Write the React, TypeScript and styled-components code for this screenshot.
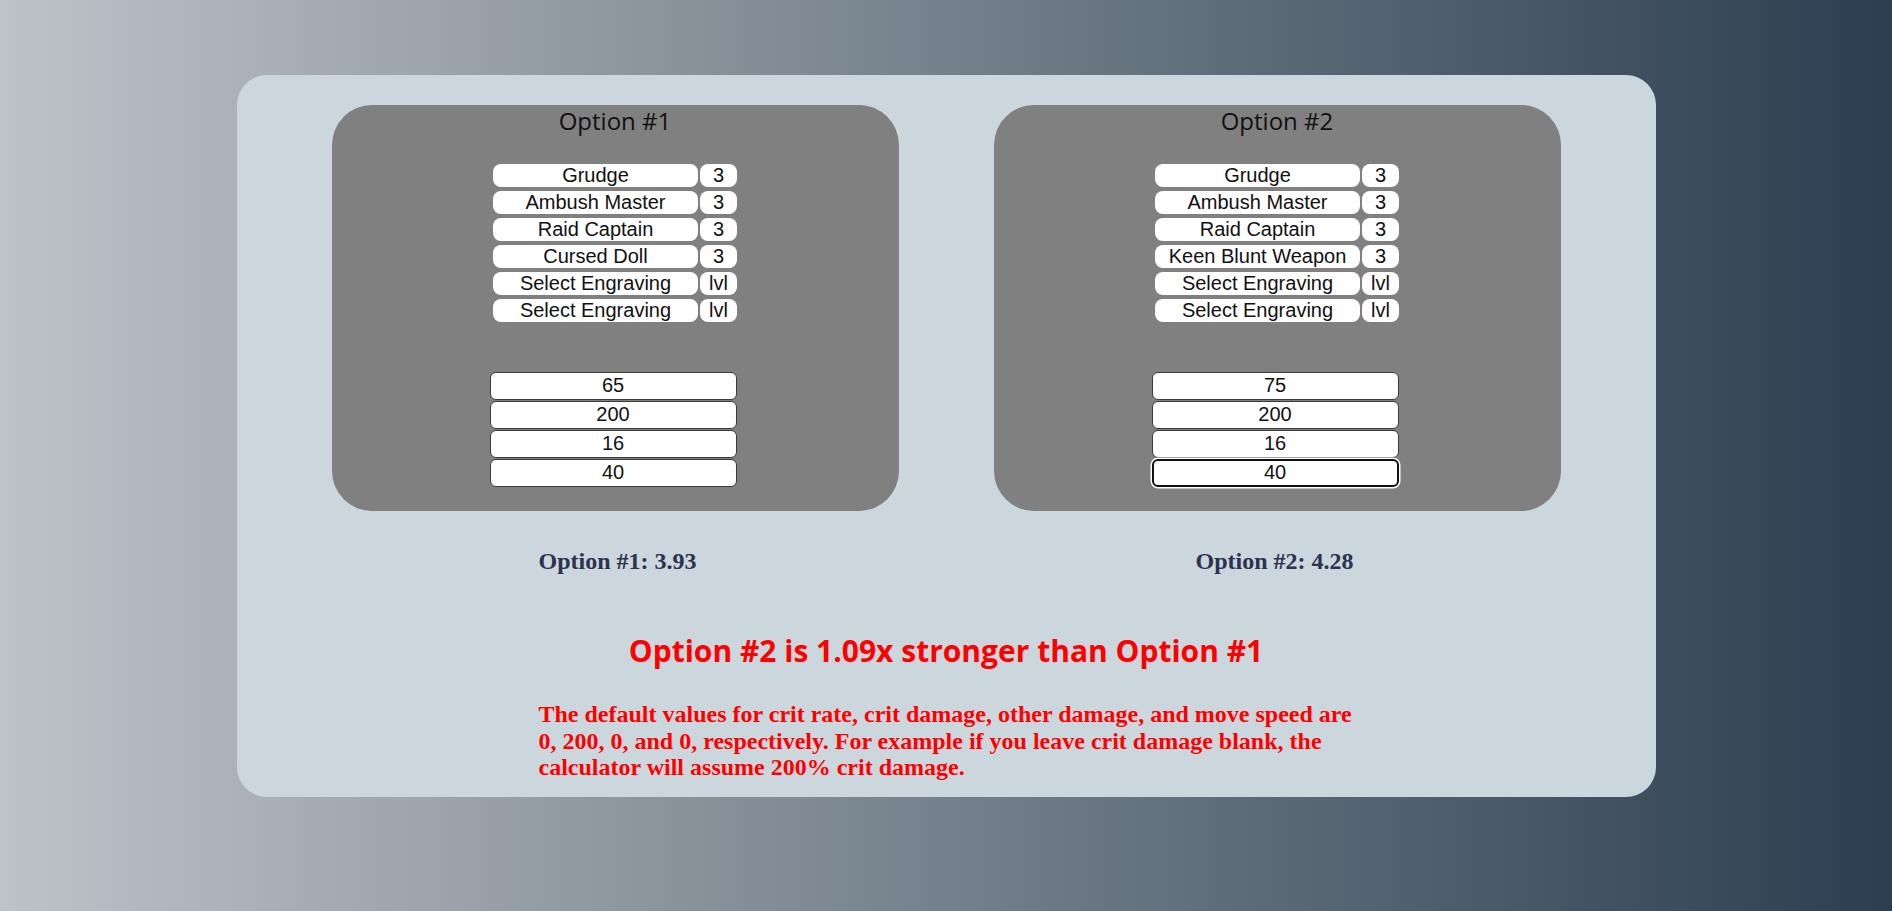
import React, { FC } from "react";
import styled, { createGlobalStyle, css } from "styled-components";

const GlobalStyle = createGlobalStyle`
html, body {
  margin: 0;
  padding: 0;
}
body {
  min-height: 100vh;
  background: linear-gradient(to right, #bdc3c7, #2c3e50);
  font-family: "Liberation Sans", Arial, sans-serif;
}
`;

const Page = styled.div`
padding-top: 75px;
min-height: 100vh;
box-sizing: border-box;
`;

const Card = styled.div`
width: 75%;
margin: 0 auto;
background-color: #ccd6dd;
border-radius: 30px;
padding: 30px 0 16px;
box-sizing: border-box;
`;

const Panels = styled.div`
display: flex;
flex-direction: row;
justify-content: center;
gap: 95px;
`;

const Panel = styled.div`
width: 567px;
height: 406px;
background-color: #808080;
border-radius: 40px;
display: flex;
flex-direction: column;
align-items: center;
box-sizing: border-box;
`;

const PanelTitle = styled.h2`
margin: 0 0 26px;
font-family: "Open Sans", sans-serif;
font-weight: 400;
font-size: 24px;
line-height: 32.7px;
color: #111;
`;

const EngravingList = styled.div`
display: flex;
flex-direction: column;
gap: 4px;
`;

const EngravingRow = styled.div`
display: flex;
flex-direction: row;
gap: 2px;
`;

const Select = styled.select<{ $wide?: boolean }>`
appearance: none;
-webkit-appearance: none;
width: ${(p) => (p.$wide ? "205px" : "37px")};
height: 23px;
padding: 0;
border: none;
border-radius: 8px;
background-color: #fff;
color: #111;
font-family: "Liberation Sans", Arial, sans-serif;
font-size: 20px;
text-align: center;
text-align-last: center;
outline: none;
`;

const StatList = styled.div`
margin-top: 50px;
margin-right: 4px;
display: flex;
flex-direction: column;
gap: 1px;
`;

const StatInput = styled.input<{ $focused?: boolean }>`
width: 247px;
height: 28px;
box-sizing: border-box;
padding: 0 2px;
border: 1px solid #3a3a3a;
border-radius: 6px;
background-color: #fff;
color: #111;
font-family: "Liberation Sans", Arial, sans-serif;
font-size: 20px;
text-align: center;
outline: none;
${(p) =>
  p.$focused &&
  css`
    border: 2px solid #111;
    box-shadow: 0 0 0 1.5px #fff;
  `}
`;

const Results = styled.div`
width: 815px;
margin: 37px auto 0;
display: flex;
justify-content: space-between;
font-family: "Liberation Serif", "Times New Roman", serif;
font-weight: 700;
font-size: 24px;
color: #2d3250;
`;

const Verdict = styled.h2`
margin: 55px 0 30px;
text-align: center;
font-family: "Open Sans", sans-serif;
font-weight: 700;
font-size: 30px;
line-height: 41px;
color: #ff0000;
`;

const Note = styled.p`
width: 815px;
margin: 0 auto;
font-family: "Liberation Serif", "Times New Roman", serif;
font-weight: 700;
font-size: 24px;
line-height: 26.5px;
color: #ff0000;
`;

type Option = {
  title: string;
  engravings: [string, string][];
  stats: string[];
  focusLast?: boolean;
};

const options: Option[] = [
  {
    title: "Option #1",
    engravings: [
      ["Grudge", "3"],
      ["Ambush Master", "3"],
      ["Raid Captain", "3"],
      ["Cursed Doll", "3"],
      ["Select Engraving", "lvl"],
      ["Select Engraving", "lvl"],
    ],
    stats: ["65", "200", "16", "40"],
  },
  {
    title: "Option #2",
    engravings: [
      ["Grudge", "3"],
      ["Ambush Master", "3"],
      ["Raid Captain", "3"],
      ["Keen Blunt Weapon", "3"],
      ["Select Engraving", "lvl"],
      ["Select Engraving", "lvl"],
    ],
    stats: ["75", "200", "16", "40"],
    focusLast: true,
  },
];

const OptionPanel: FC<{ option: Option }> = ({ option }) => {
  return (
    <Panel>
      <PanelTitle>{option.title}</PanelTitle>
      <EngravingList>
        {option.engravings.map(([name, lvl], i) => (
          <EngravingRow key={i}>
            <Select $wide defaultValue={name}>
              <option value={name}>{name}</option>
            </Select>
            <Select defaultValue={lvl}>
              <option value={lvl}>{lvl}</option>
            </Select>
          </EngravingRow>
        ))}
      </EngravingList>
      <StatList>
        {option.stats.map((s, i) => (
          <StatInput
            key={i}
            type="text"
            defaultValue={s}
            $focused={option.focusLast && i === option.stats.length - 1}
          />
        ))}
      </StatList>
    </Panel>
  );
};

const App: FC = () => {
  return (
    <>
      <GlobalStyle />
      <Page>
        <Card>
          <Panels>
            {options.map((o) => (
              <OptionPanel key={o.title} option={o} />
            ))}
          </Panels>
          <Results>
            <span>Option #1: 3.93</span>
            <span>Option #2: 4.28</span>
          </Results>
          <Verdict>Option #2 is 1.09x stronger than Option #1</Verdict>
          <Note>
            The default values for crit rate, crit damage, other damage, and move speed are
            0, 200, 0, and 0, respectively. For example if you leave crit damage blank, the
            calculator will assume 200% crit damage.
          </Note>
        </Card>
      </Page>
    </>
  );
};

export default App;
